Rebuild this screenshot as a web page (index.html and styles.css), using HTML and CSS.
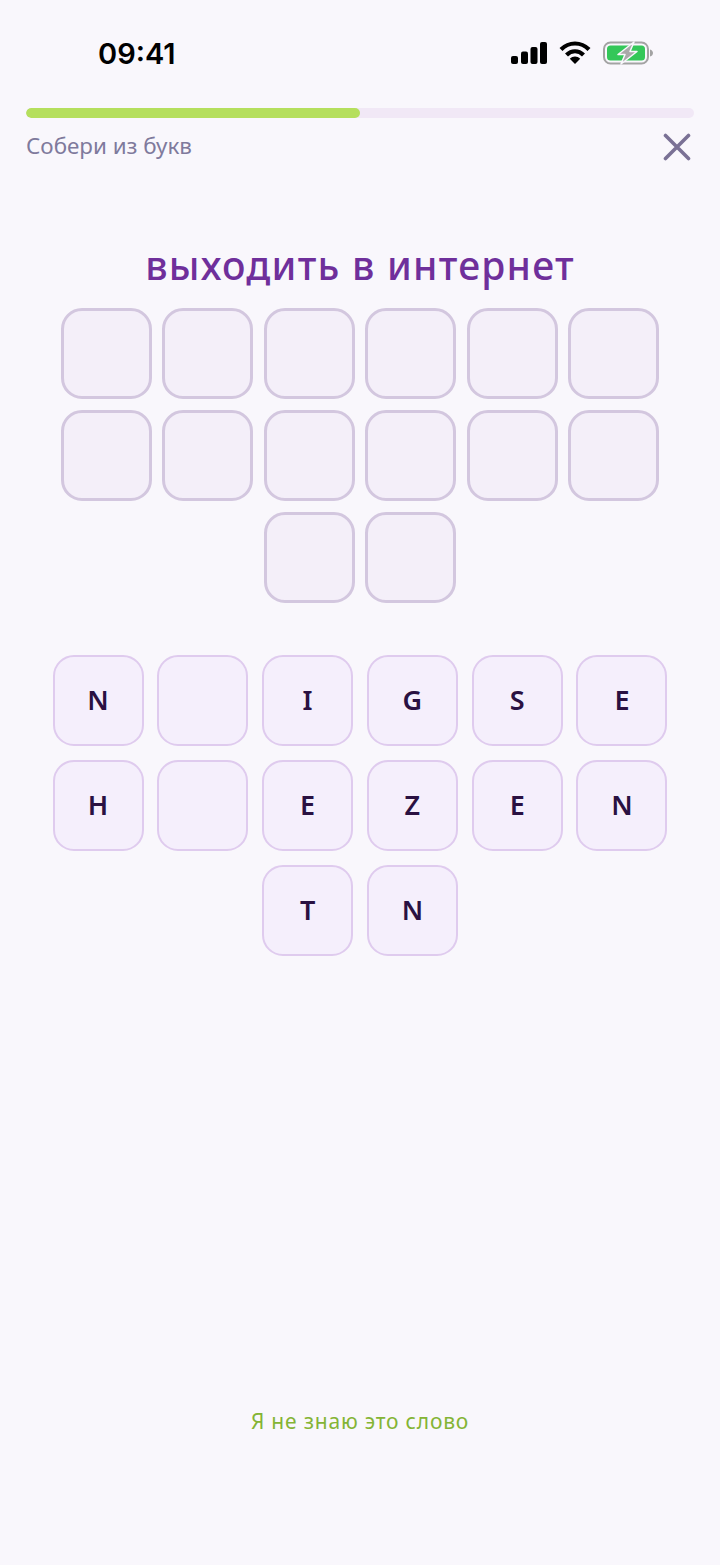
FILE: index.html
```html
<!DOCTYPE html>
<html lang="ru">
<head>
    <meta charset="UTF-8">
    <meta name="viewport" content="width=device-width, initial-scale=1.0">
    <title>Собери из букв</title>
    <link rel="stylesheet" href="styles.css">
</head>
<body>
    <div class="screen">
        <div class="status-bar">
            <span class="time">09:41</span>
            <div class="status-icons">
                <svg class="icon-signal" width="36" height="22" viewBox="0 0 36 22">
                    <rect x="0" y="14" width="7" height="8" rx="2"/>
                    <rect x="10" y="9.500" width="7" height="12.500" rx="2"/>
                    <rect x="19.500" y="5" width="7" height="17" rx="2"/>
                    <rect x="29" y="0" width="7" height="22" rx="2"/>
                </svg>
                <svg class="icon-wifi" width="32" height="24" viewBox="0 0 32 24">
                    <path d="M2 8.500C10 0.500 22 0.500 30 8.500" fill="none" stroke="#000" stroke-width="4.200"/>
                    <path d="M7.500 14C12.500 9 19.500 9 24.500 14" fill="none" stroke="#000" stroke-width="4.200"/>
                    <path d="M10.800 17.800C13.800 14.600 18.200 14.600 21.200 17.800L16 23Z"/>
                </svg>
                <svg class="icon-battery" width="50" height="24" viewBox="0 0 50 24">
                    <rect x="1" y="1.500" width="44" height="21" rx="6.500" fill="none" stroke="#a3a3a3" stroke-width="2"/>
                    <rect x="4" y="4.500" width="38" height="15" rx="3.500" fill="#34c759"/>
                    <path d="M47 8.500C49 9 50 10.500 50 12C50 13.500 49 15 47 15.500Z" fill="#a3a3a3"/>
                    <path d="M31 1L15 13.500H22L18 23L34 10.500H27Z" fill="#a9a9a9" stroke="#f9f7fc" stroke-width="1.500" stroke-linejoin="round"/>
                </svg>
            </div>
        </div>

        <div class="progress">
            <div class="progress-fill" style="width: 50%"></div>
        </div>

        <div class="task-row">
            <span class="task-name">Собери из букв</span>
            <svg class="icon-close" width="28" height="28" viewBox="0 0 28 28">
                <path d="M2.500 2.500L25.500 25.500M25.500 2.500L2.500 25.500" fill="none" stroke="#7a7195" stroke-width="3.600" stroke-linecap="round"/>
            </svg>
        </div>

        <h1 class="word">выходить в интернет</h1>

        <div class="slots">
            <div class="slot"></div>
            <div class="slot"></div>
            <div class="slot"></div>
            <div class="slot"></div>
            <div class="slot"></div>
            <div class="slot"></div>
            <div class="slot"></div>
            <div class="slot"></div>
            <div class="slot"></div>
            <div class="slot"></div>
            <div class="slot"></div>
            <div class="slot"></div>
            <div class="slot"></div>
            <div class="slot"></div>
        </div>

        <div class="letters">
            <div class="letter">N</div>
            <div class="letter"></div>
            <div class="letter">I</div>
            <div class="letter">G</div>
            <div class="letter">S</div>
            <div class="letter">E</div>
            <div class="letter">H</div>
            <div class="letter"></div>
            <div class="letter">E</div>
            <div class="letter">Z</div>
            <div class="letter">E</div>
            <div class="letter">N</div>
            <div class="letter">T</div>
            <div class="letter">N</div>
        </div>

        <a class="skip" href="#">Я не знаю это слово</a>
    </div>
</body>
</html>
```

FILE: styles.css
```css
body {
    margin: 0;
    background-color: #f9f7fc;
    font-family: 'Noto Sans', 'Open Sans', sans-serif;
}

.screen {
    height: 1565px;
    overflow: hidden;
    display: flex;
    flex-direction: column;
}

.status-bar {
    height: 108px;
    padding: 0 67px 0 98px;
    box-sizing: border-box;
    display: flex;
    justify-content: space-between;
    align-items: flex-start;
    flex-shrink: 0;
}

.time {
    margin-top: 36px;
    font-family: 'Inter', sans-serif;
    font-size: 29px;
    line-height: 35px;
    font-weight: 600;
    color: #000;
}

.status-icons {
    margin-top: 41px;
    display: flex;
    align-items: center;
    gap: 12px;
}

.progress {
    height: 10px;
    margin: 0 26px;
    background-color: #f1e8f6;
    border-radius: 5px;
    overflow: hidden;
    flex-shrink: 0;
}

.progress-fill {
    height: 100%;
    background-color: #b5df5d;
    border-radius: 5px;
}

.task-row {
    margin: 12px 29px 0 26px;
    height: 30px;
    display: flex;
    justify-content: space-between;
    align-items: center;
    flex-shrink: 0;
}

.task-name {
    margin-top: 2px;
    font-size: 22.4px;
    line-height: 30px;
    color: #7f7a9c;
}

.icon-close {
    margin-top: 4px;
}

.word {
    margin: 80px 0 0;
    text-align: center;
    font-size: 39px;
    line-height: 50px;
    letter-spacing: 1.25px;
    font-weight: 500;
    color: #6f2f9b;
}

.slots {
    margin-top: 18px;
    padding: 0 60px;
    display: flex;
    flex-wrap: wrap;
    justify-content: center;
    column-gap: 10.6px;
    row-gap: 11px;
}

.slot {
    width: 91px;
    height: 91px;
    box-sizing: border-box;
    background-color: #f4eff9;
    border: 3px solid #d3c7df;
    border-radius: 21px;
}

.letters {
    margin-top: 52px;
    padding: 0 52px;
    display: flex;
    flex-wrap: wrap;
    justify-content: center;
    column-gap: 13.8px;
    row-gap: 14px;
}

.letter {
    width: 91px;
    height: 91px;
    box-sizing: border-box;
    padding-bottom: 2px;
    display: flex;
    justify-content: center;
    align-items: center;
    background-color: #f5effc;
    border: 2px solid #dfcbee;
    border-radius: 21px;
    font-size: 27px;
    font-weight: 600;
    color: #2a1142;
}

.skip {
    margin-top: 450px;
    text-align: center;
    font-size: 21px;
    line-height: 30px;
    letter-spacing: 0.8px;
    color: #84b435;
    text-decoration: none;
}
```
